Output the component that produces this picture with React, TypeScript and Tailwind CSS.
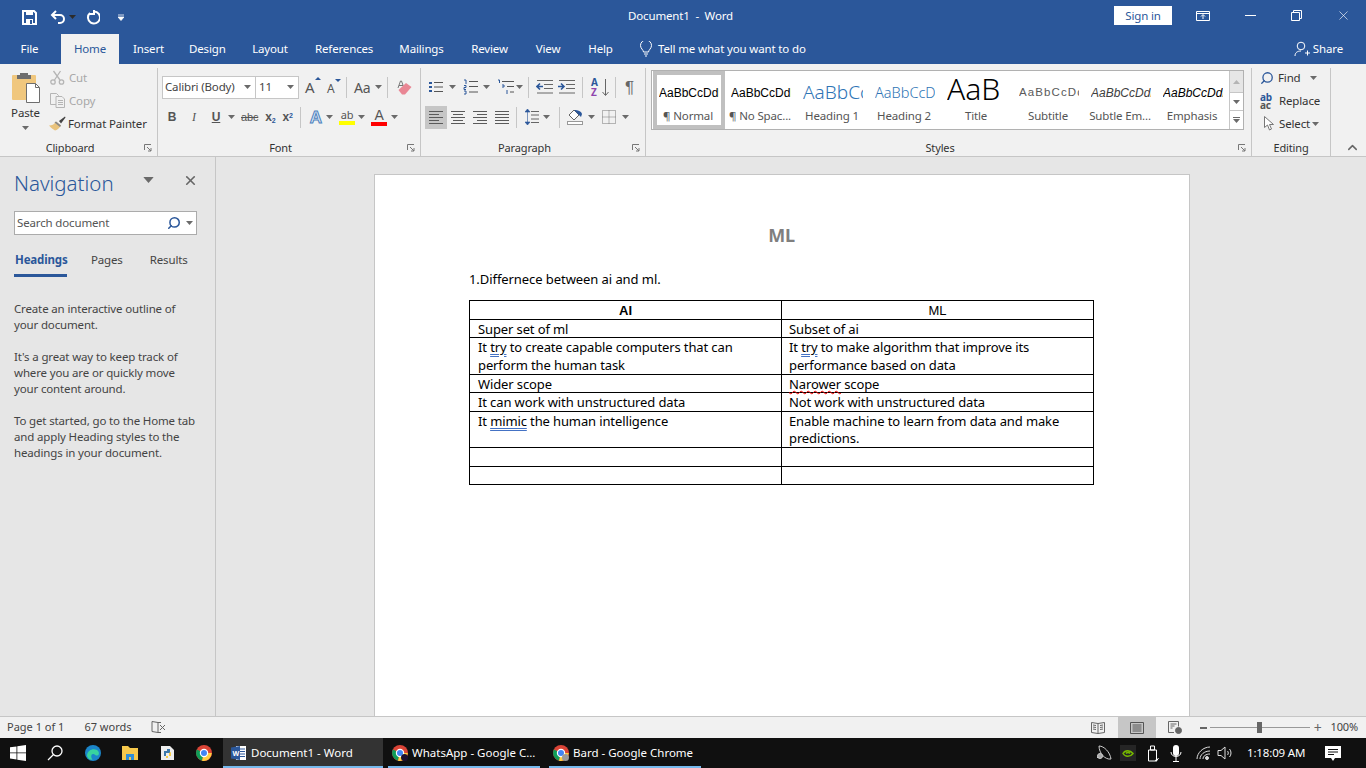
import React from 'react';
import { ChevronUp, X, Search } from 'lucide-react';

const ui = "font-['Noto_Sans',sans-serif] tracking-[-0.15px]";

const Caret = ({ className = '' }: { className?: string }) => (
  <svg width="7" height="4" viewBox="0 0 7 4" className={`shrink-0 ${className}`}>
    <path d="M0 0h7L3.5 4z" fill="#6a6a6a" />
  </svg>
);

const Launcher = () => (
  <svg width="8" height="8" viewBox="0 0 8 8" className="shrink-0">
    <path d="M.5 6V.5H7M3 3l4 4M7 4v3H4" fill="none" stroke="#777" />
  </svg>
);

const RibbonGroup = ({
  label,
  width,
  launcher = true,
  children,
}: {
  label: string;
  width: number;
  launcher?: boolean;
  children: React.ReactNode;
}) => (
  <div style={{ width }} className="h-full shrink-0 flex flex-col border-r border-[#c6c6c6] mb-[4px]">
    <div className="flex-1 min-h-0">{children}</div>
    <div className={`h-[18px] flex items-center relative text-[11px] text-[#333] justify-center pt-[2px] ${launcher ? 'pr-[17px]' : ''}`}>
      <span>{label}</span>
      {launcher && (
        <span className="absolute right-[5px] top-[6px]">
          <Launcher />
        </span>
      )}
    </div>
  </div>
);

const BulletsIcon = () => (
  <svg width="14" height="14" viewBox="0 0 14 14">
    <path d="M0 2h3v2H0zM0 6h3v2H0zM0 10h3v2H0z" fill="#2b579a" />
    <path d="M5 2.500h9M5 7h9M5 11.500h9" stroke="#555" />
  </svg>
);

const NumbersIcon = () => (
  <svg width="15" height="16" viewBox="0 0 15 16">
    <path d="M1 1h2v4M1 6.500h2v2H1v2h2M1 12h2v3H1" fill="none" stroke="#2b579a" />
    <path d="M6 2.500h9M6 7.500h9M6 13h9" stroke="#555" />
  </svg>
);

const MultiIcon = () => (
  <svg width="18" height="16" viewBox="0 0 18 16">
    <path d="M1 1h1.500v3M5 6h2v2H5M10 11v4" fill="none" stroke="#2b579a" />
    <path d="M5 2.500h12M10 7.500h7M13 13h4" stroke="#555" />
  </svg>
);

const OutdentIcon = ({ flip = false }: { flip?: boolean }) => (
  <svg width="17" height="14" viewBox="0 0 17 14">
    <path d="M1 .5h16M8 4.500h9M8 8.500h9M1 13h16" stroke="#666" />
    <path d={flip ? 'M0 6.500h5M3 3.500l3 3-3 3' : 'M7 6.500H2M4 3.500l-3 3 3 3'} fill="none" stroke="#2b579a" strokeWidth="1.600" />
  </svg>
);

const AlignIcon = ({ kind }: { kind: 'left' | 'center' | 'right' | 'justify' }) => {
  const rows: Record<string, string> = {
    left: 'M0 .5h14M0 3.500h10M0 6.500h14M0 9.500h10M0 12.500h14',
    center: 'M0 .5h14M2 3.500h10M0 6.500h14M2 9.500h10M0 12.500h14',
    right: 'M0 .5h14M4 3.500h10M0 6.500h14M4 9.500h10M0 12.500h14',
    justify: 'M0 .5h14M0 3.500h14M0 6.500h14M0 9.500h14M0 12.500h14',
  };
  return (
    <svg width="14" height="13" viewBox="0 0 14 13">
      <path d={rows[kind]} stroke="#5a5a5a" />
    </svg>
  );
};

const PasteIcon = () => (
  <svg width="30" height="32" viewBox="0 0 30 32">
    <rect x="1" y="3" width="24" height="25" rx="1" fill="#f0c77e" />
    <path d="M9 3V1h8v2h3v4H6V3z" fill="#6e6e6e" />
    <path d="M15.500 11.500h9l4 4v15h-13z" fill="#fff" stroke="#6e6e6e" />
    <path d="M24.500 11.500v4h4" fill="none" stroke="#6e6e6e" />
  </svg>
);

const ScissorsIcon = () => (
  <svg width="15" height="15" viewBox="0 0 15 15" fill="none" stroke="#b5b5b5" strokeWidth="1.300">
    <circle cx="3" cy="12" r="2.200" />
    <circle cx="11.500" cy="12" r="2.200" />
    <path d="M4.500 10 10.500 1M10 10 3.500 1" />
  </svg>
);

const CopyIcon = () => (
  <svg width="15" height="15" viewBox="0 0 15 15" fill="#f1f1f1" stroke="#b5b5b5">
    <path d="M.5.5h6l2 2v9h-8z" />
    <path d="M6 3.500h6l2.500 2.500v8.500H6zM8 7.500h5M8 9.500h5M8 11.500h5" />
  </svg>
);

const BrushIcon = () => (
  <svg width="17" height="15" viewBox="0 0 17 15">
    <path d="M10 5 16 .5l.5 1L12 7.500z" fill="#444" />
    <path d="M0 9.500c3 0 5-1 7-4l5 4c-2 3-4 4.500-6 5-1-.5-4-2.500-6-5z" fill="#e9c37d" />
    <path d="M7 5.500l5 4-1 1.500-5.500-4.500z" fill="#888" />
  </svg>
);

const EraserIcon = () => (
  <svg width="15" height="15" viewBox="0 0 15 15">
    <path d="M1 8 3.500 1h1L7 8M2 5.500h4" fill="none" stroke="#777" />
    <path d="M1.500 10 9 3l5.500 4L8 14.500H5z" fill="#e98694" />
  </svg>
);

const FillIcon = () => (
  <svg width="17" height="16" viewBox="0 0 17 16">
    <path d="M7 1 2 6l5 5 5-5z" fill="#fff" stroke="#666" />
    <path d="M7 1c4 0 7 1 8 4l-1 3-2-2z" fill="#2b579a" />
    <rect x=".5" y="12.500" width="15" height="3" fill="#fff" stroke="#999" />
  </svg>
);

const BordersIcon = () => (
  <svg width="14" height="14" viewBox="0 0 14 14">
    <path d="M.5.5h13v13H.5zM7 .5v13M.5 7h13" fill="none" stroke="#777" strokeDasharray="1 1" />
  </svg>
);

const LineSpacingIcon = () => (
  <svg width="14" height="16" viewBox="0 0 14 16">
    <path d="M2.500 0 0 3h5zM2.500 16 0 13h5zM2.500 3v10" fill="#2b579a" stroke="#2b579a" strokeWidth=".6" />
    <path d="M6 2.500h8M6 6h8M6 10h8M6 13.500h8" stroke="#666" />
  </svg>
);

const Sep = () => <div className="w-px h-[21px] bg-[#c6c6c6] shrink-0" />;

const styleItems = [
  { label: '¶ Normal', preview: 'AaBbCcDdEe', cls: "text-[12px] text-black font-['Liberation_Sans',sans-serif]", selected: true },
  { label: '¶ No Spac...', preview: 'AaBbCcDdEe', cls: "text-[12px] text-black font-['Liberation_Sans',sans-serif]" },
  { label: 'Heading 1', preview: 'AaBbCcDd', cls: 'text-[19px] text-[#2e74b5] font-light' },
  { label: 'Heading 2', preview: 'AaBbCcDd', cls: 'text-[14.500px] text-[#2e74b5] font-light' },
  { label: 'Title', preview: 'AaB', cls: 'text-[30px] text-black font-light leading-[30px] -mt-[7px]' },
  { label: 'Subtitle', preview: 'AaBbCcDd', cls: "text-[11.500px] text-[#5a5a5a] tracking-[1.100px] font-['Liberation_Sans',sans-serif]" },
  { label: 'Subtle Em...', preview: 'AaBbCcDdEe', cls: "text-[12px] text-[#404040] italic font-['Liberation_Sans',sans-serif]" },
  { label: 'Emphasis', preview: 'AaBbCcDdEe', cls: "text-[12px] text-black italic font-['Liberation_Sans',sans-serif]" },
];

const tabs = [
  { label: 'Insert', width: 29 },
  { label: 'Design', width: 36 },
  { label: 'Layout', width: 36 },
  { label: 'References', width: 57 },
  { label: 'Mailings', width: 45 },
  { label: 'Review', width: 37 },
  { label: 'View', width: 26 },
  { label: 'Help', width: 25 },
];

const Ribbon = () => (
  <div className={`h-[93px] bg-[#f1f1f1] border-b border-[#c6c6c6] flex pt-[4px] shrink-0 ${ui}`}>
    <RibbonGroup label="Clipboard" width={158}>
      <div className="flex h-full">
        <div className="w-[46px] flex flex-col items-center pt-[4px] pl-[5px] text-[11.500px] text-[#333]">
          <PasteIcon />
          <span className="mt-[1px] leading-[16px]">Paste</span>
          <Caret className="mt-[5px]" />
        </div>
        <div className="flex flex-col pl-[4px] -mt-[2px] text-[11.500px]">
          <div className="h-[23px] flex items-center gap-[4px] text-[#a8a8a8]"><ScissorsIcon /><span>Cut</span></div>
          <div className="h-[23px] flex items-center gap-[4px] text-[#a8a8a8]"><CopyIcon /><span>Copy</span></div>
          <div className="h-[23px] flex items-center gap-[2px] text-[#333] whitespace-nowrap -ml-[1px]"><BrushIcon /><span>Format Painter</span></div>
        </div>
      </div>
    </RibbonGroup>

    <RibbonGroup label="Font" width={263}>
      <div className="pl-[4px] pt-[7px]">
        <div className="flex items-center h-[24px]">
          <div className="w-[94px] h-[23px] bg-white border border-[#c6c6c6] flex items-center justify-between pl-[2px] pr-[3px] text-[11.500px] text-[#444]">
            <span className="whitespace-nowrap">Calibri (Body)</span><Caret className="mr-[1px]" />
          </div>
          <div className="w-[43px] h-[23px] bg-white border border-[#c6c6c6] border-l-0 flex items-center justify-between px-[3px] text-[11.500px] text-[#444]">
            <span>11</span><Caret className="mr-[1px]" />
          </div>
          <span className="ml-[6px] w-[15px] text-[15px] text-[#555] relative leading-none">A<span className="absolute -top-[3px] -right-[1px] w-0 h-0 border-x-[3px] border-b-[3px] border-x-transparent border-b-[#2b579a]" /></span>
          <span className="ml-[7px] w-[15px] text-[12px] text-[#555] relative leading-none pt-[3px]">A<span className="absolute -top-[1px] right-[1px] w-0 h-0 border-x-[3px] border-t-[3px] border-x-transparent border-t-[#2b579a]" /></span>
          <div className="ml-[4px]"><Sep /></div>
          <span className="ml-[7px] text-[14px] text-[#555]">Aa</span>
          <Caret className="ml-[4px]" />
          <div className="ml-[5px]"><Sep /></div>
          <span className="ml-[9px]"><EraserIcon /></span>
        </div>
        <div className="flex items-center h-[24px] mt-[6px] pl-[3px] text-[#555]">
          <span className="w-[14px] text-center text-[12px] font-bold font-['Liberation_Sans',sans-serif]">B</span>
          <span className="ml-[8px] w-[14px] text-center text-[12px] italic font-['Liberation_Serif',serif]">I</span>
          <span className="ml-[8px] w-[14px] text-center text-[12px] font-bold underline font-['Liberation_Sans',sans-serif]">U</span>
          <Caret className="ml-[5px]" />
          <span className="ml-[6px] text-[11px] line-through font-['Liberation_Sans',sans-serif]">abc</span>
          <span className="ml-[7px] text-[12px] font-bold font-['Liberation_Sans',sans-serif]">x<sub className="text-[7px] text-[#2b579a]">2</sub></span>
          <span className="ml-[7px] text-[12px] font-bold font-['Liberation_Sans',sans-serif]">x<sup className="text-[7px] text-[#2b579a]">2</sup></span>
          <div className="ml-[7px]"><Sep /></div>
          <span className="ml-[9px] text-[17px] font-bold text-[#dcebf9] leading-none [-webkit-text-stroke:1px_#4f81bd] font-['Liberation_Sans',sans-serif]">A</span>
          <Caret className="ml-[4px]" />
          <span className="ml-[6px] w-[16px] flex flex-col items-center">
            <span className="text-[11px] leading-[11px] text-[#555]">ab</span>
            <span className="w-[16px] h-[4px] bg-[#ffff00] mt-[1px]" />
          </span>
          <Caret className="ml-[3px]" />
          <span className="ml-[6px] w-[16px] flex flex-col items-center">
            <span className="text-[14px] leading-[12px] text-[#555] font-['Liberation_Sans',sans-serif]">A</span>
            <span className="w-[16px] h-[4px] bg-[#ff0000] mt-[1px]" />
          </span>
          <Caret className="ml-[4px]" />
        </div>
      </div>
    </RibbonGroup>

    <RibbonGroup label="Paragraph" width={225}>
      <div className="pl-[4px] pt-[7px]">
        <div className="flex items-center h-[24px] pl-[4px]">
          <BulletsIcon /><Caret className="ml-[6px]" />
          <span className="ml-[7px]"><NumbersIcon /></span><Caret className="ml-[5px]" />
          <span className="ml-[7px]"><MultiIcon /></span><Caret className="ml-[1px]" />
          <div className="ml-[5px]"><Sep /></div>
          <span className="ml-[7px]"><OutdentIcon /></span>
          <span className="ml-[5px]"><OutdentIcon flip /></span>
          <div className="ml-[7px]"><Sep /></div>
          <span className="ml-[8px] w-[19px] flex items-center">
            <span className="w-[10px] text-[10px] leading-[10px] font-bold flex flex-col">
              <span className="text-[#2b579a]">A</span><span className="text-[#8e44ad]">Z</span>
            </span>
            <svg width="7" height="17" viewBox="0 0 7 17" className="ml-[1px]" fill="none" stroke="#666">
              <path d="M3.500 0v16M.5 13l3 3.500 3-3.500" />
            </svg>
          </span>
          <div className="ml-[5px]"><Sep /></div>
          <span className="ml-[9px] text-[17px] leading-none text-[#666] font-['Liberation_Sans',sans-serif]">¶</span>
        </div>
        <div className="flex items-center h-[24px] mt-[6px]">
          <span className="w-[22px] h-[23px] bg-[#c6c6c6] flex items-center justify-center"><AlignIcon kind="left" /></span>
          <span className="w-[22px] h-[23px] flex items-center justify-center"><AlignIcon kind="center" /></span>
          <span className="w-[22px] h-[23px] flex items-center justify-center"><AlignIcon kind="right" /></span>
          <span className="w-[22px] h-[23px] flex items-center justify-center"><AlignIcon kind="justify" /></span>
          <div className="ml-[3px]"><Sep /></div>
          <span className="ml-[8px]"><LineSpacingIcon /></span><Caret className="ml-[4px]" />
          <div className="ml-[9px]"><Sep /></div>
          <span className="ml-[7px]"><FillIcon /></span><Caret className="ml-[4px]" />
          <span className="ml-[7px]"><BordersIcon /></span><Caret className="ml-[6px]" />
        </div>
      </div>
    </RibbonGroup>

    <RibbonGroup label="Styles" width={606}>
      <div className="pl-[5px] pt-[2px]">
        <div className="w-[593px] h-[60px] border border-[#b1b1b1] bg-white flex">
          <div className="pl-px flex flex-1">
            {styleItems.map((s) => (
              <div
                key={s.label}
                className={`w-[72px] h-full shrink-0 flex flex-col items-center border-[4px] ${s.selected ? 'border-[#c0c0c0]' : 'border-transparent'}`}
              >
                <div className="h-[33px] w-[60px] pt-[3px] tracking-normal">
                  <div className="h-[29px] overflow-hidden flex items-center justify-start">
                    <span className={`whitespace-nowrap ${s.cls}`}>{s.preview}</span>
                  </div>
                </div>
                <div className="pr-[2px] text-[11.500px] text-[#555] leading-[16px] whitespace-nowrap">{s.label}</div>
              </div>
            ))}
          </div>
          <div className="w-[15px] flex flex-col border-l border-[#c6c6c6]">
            <div className="h-[21px] bg-[#e6e6e6] flex items-center justify-center"><Caret className="rotate-180 opacity-40" /></div>
            <div className="h-[19px] border-y border-[#c6c6c6] flex items-center justify-center"><Caret /></div>
            <div className="flex-1 flex flex-col items-center justify-center gap-px">
              <span className="w-[7px] h-px bg-[#6a6a6a]" />
              <Caret />
            </div>
          </div>
        </div>
      </div>
    </RibbonGroup>

    <RibbonGroup label="Editing" width={79} launcher={false}>
      <div className="pl-[8px] -mt-[2px] text-[11.500px] text-[#333]">
        <div className="h-[23px] flex items-center">
          <Search size={14} strokeWidth={2.2} color="#2b579a" className="-scale-x-100" />
          <span className="ml-[4px]">Find</span><Caret className="ml-[9px]" />
        </div>
        <div className="h-[23px] flex items-center">
          <span className="w-[16px] text-[10px] leading-[8px] font-bold text-[#2b579a]">ab<br /><span className="text-[#555]">ac</span></span>
          <span className="ml-[3px]">Replace</span>
        </div>
        <div className="h-[23px] flex items-center">
          <svg width="11" height="15" viewBox="0 0 11 15" className="ml-[4px]">
            <path d="M.5.5v11l3-2.500 2 5 2-1-2-4.500h4z" fill="#fff" stroke="#777" />
          </svg>
          <span className="ml-[4px]">Select</span><Caret className="ml-[2px]" />
        </div>
      </div>
    </RibbonGroup>

    <div className="flex-1 flex items-end justify-center pb-[1px] pl-[7px]">
      <ChevronUp size={15} strokeWidth={2.4} color="#666" />
    </div>
  </div>
);

const TitleBar = () => (
  <div className={`h-[34px] bg-[#2b579a] flex items-center text-white shrink-0 relative ${ui}`}>
    <svg width="15" height="15" viewBox="0 0 15 15" className="ml-[22px]">
      <path d="M1 1h11l2 2v11H1z" fill="none" stroke="#fff" strokeWidth="2" />
      <path d="M4 1h7v4H4zM4 9h7v5H4z" fill="#fff" />
      <path d="M8 10h2v4H8z" fill="#2b579a" />
    </svg>
    <svg width="16" height="14" viewBox="0 0 16 14" className="ml-[13px]" fill="none" stroke="#fff" strokeWidth="2">
      <path d="M6 1 2 5l4 4M2 5h8a4 4 0 0 1 0 8H8" />
    </svg>
    <Caret className="ml-[3px] invert brightness-200" />
    <svg width="15" height="15" viewBox="0 0 15 15" className="ml-[9px]" fill="none" stroke="#fff" strokeWidth="2">
      <path d="M5 3a6 6 0 1 0 4-1.500M9 0v4H5" />
    </svg>
    <svg width="6" height="7" viewBox="0 0 6 7" className="ml-[18px]">
      <path d="M0 1h6M0 3h6L3 6.500z" stroke="#fff" fill="#fff" strokeWidth=".8" />
    </svg>
    <div className="absolute left-[628px] top-[8px] text-[11.500px] leading-[16px] whitespace-nowrap">Document1&nbsp; -&nbsp; Word</div>
    <div className="ml-auto flex items-center -mt-[3px]">
      <div className="w-[58px] h-[19px] bg-white text-[#2b579a] text-[11.500px] flex items-center justify-center">Sign in</div>
      <svg width="14" height="10" viewBox="0 0 14 10" className="ml-[24px]" fill="none" stroke="#fff">
        <path d="M.5.5h13v9H.5zM.5 2.500h13M7 8V4M5 5.500l2-2 2 2" />
      </svg>
      <svg width="11" height="1" viewBox="0 0 11 1" className="ml-[35px]"><path d="M0 .5h11" stroke="#fff" /></svg>
      <svg width="11" height="11" viewBox="0 0 11 11" className="ml-[35px]" fill="none" stroke="#fff">
        <path d="M.5 2.500h8v8h-8zM2.500 2.500v-2h8v8h-2" />
      </svg>
      <X size={15} strokeWidth={1} className="ml-[34px] mr-[15px]" />
    </div>
  </div>
);

const TabBar = () => (
  <div className={`h-[30px] bg-[#2b579a] flex items-stretch text-white text-[11.500px] shrink-0 ${ui}`}>
    <div className="w-[59px] mr-[2px] flex items-center justify-center">File</div>
    <div className="w-[58px] bg-[#f1f1f1] text-[#2b579a] flex items-center justify-center">Home</div>
    <div className="flex items-center gap-[27px] ml-[14px]">
      {tabs.map((t) => (
        <span key={t.label} style={{ width: t.width }} className="whitespace-nowrap text-center">{t.label}</span>
      ))}
    </div>
    <div className="flex items-center ml-[27px]">
      <svg width="12" height="16" viewBox="0 0 12 16" fill="none" stroke="#fff">
        <path d="M3.500 11c0-2-3-3.500-3-6.500a5.500 5.500 0 0 1 11 0c0 3-3 4.500-3 6.500zM4 13h4M5 15h2" />
      </svg>
      <span className="ml-[6px] whitespace-nowrap">Tell me what you want to do</span>
    </div>
    <div className="ml-auto flex items-center mr-[23px]">
      <svg width="16" height="16" viewBox="0 0 16 16" fill="none" stroke="#fff">
        <circle cx="7" cy="5" r="3.800" />
        <path d="M1 15c0-3.500 2.500-5 6-5M11 12h5M13.500 9.500v5" />
      </svg>
      <span className="ml-[3px]">Share</span>
    </div>
  </div>
);

const NavPane = () => (
  <div className={`w-[216px] shrink-0 border-r border-[#c6c6c6] bg-[#e6e6e6] pl-[14px] ${ui}`}>
    <div className="h-[54px] pr-[17px] flex justify-between">
      <span className="text-[20.500px] text-[#2b579a] font-light leading-[28px] mt-[12px] tracking-normal">Navigation</span>
      <div className="flex items-center h-[18px] mt-[14px]">
        <Caret className="scale-150" />
        <X size={15} strokeWidth={2.6} color="#666" className="ml-[31px]" />
      </div>
    </div>
    <div className="w-[183px] h-[24px] border border-[#ababab] bg-white flex items-center pl-[2px] pr-[3px] text-[11.500px] text-[#555]">
      <span>Search document</span>
      <Search size={14} strokeWidth={2.6} color="#2b579a" className="ml-auto -scale-x-100" />
      <Caret className="ml-[5px]" />
    </div>
    <div className="flex text-[11.500px] text-[#444] mt-[15px] h-[27px] leading-[20px]">
      <span className="w-[53px] pl-px text-[#2b579a] font-bold border-b-[3px] border-[#2b579a] whitespace-nowrap">Headings</span>
      <span className="ml-[24px]">Pages</span>
      <span className="ml-[27px]">Results</span>
    </div>
    <div className="mt-[24px] text-[11.500px] leading-[16px] text-[#444] whitespace-nowrap">
      <p>Create an interactive outline of<br />your document.</p>
      <p className="mt-[16px]">It's a great way to keep track of<br />where you are or quickly move<br />your content around.</p>
      <p className="mt-[16px]">To get started, go to the Home tab<br />and apply Heading styles to the<br />headings in your document.</p>
    </div>
  </div>
);

const blueLine = 'underline decoration-double decoration-[#4472c4] underline-offset-2';
const redLine = 'underline decoration-wavy decoration-[#f00000] decoration-1 underline-offset-1';

const Cell = ({
  children,
  second = false,
  lineClass = 'leading-[16px] pt-px',
}: {
  children?: React.ReactNode;
  second?: boolean;
  lineClass?: string;
}) => (
  <td className={`border border-black ${second ? 'pl-[7px]' : 'pl-[8px]'} pr-[8px] align-top text-[13px] ${lineClass} text-black`}>{children}</td>
);

const Page = () => (
  <div className="flex-1 min-w-0 bg-[#e6e6e6] pl-[158px] pt-[17px] overflow-hidden">
    <div className={`w-[816px] h-[600px] bg-white border border-[#c6c6c6] pl-[94px] ${ui}`}>
      <div className="w-[625px] pt-[48px] text-center text-[18px] leading-[24px] font-bold text-[#7f7f7f]">ML</div>
      <p className="text-[13px] leading-[18px] text-black mt-[23px] tracking-[-0.07px]">1.Differnece between ai and ml.</p>
      <table className="w-[625px] mt-[12px] border-collapse table-fixed tracking-[-0.12px]">
        <tbody>
          <tr className="h-[19px]">
            <td className="border border-black w-[312px] pt-px text-center text-[13px] leading-[17px] font-bold font-['Liberation_Sans',sans-serif]">AI</td>
            <td className="border border-black pt-px text-center text-[13px] leading-[17px] font-['Liberation_Sans',sans-serif]">ML</td>
          </tr>
          <tr className="h-[18px]"><Cell>Super set of ml</Cell><Cell second>Subset of ai</Cell></tr>
          <tr className="h-[37px]">
            <Cell lineClass="leading-[18px]">It <span className={blueLine}>try</span> to create capable computers that can perform the human task</Cell>
            <Cell second lineClass="leading-[18px]">It <span className={blueLine}>try</span> to make algorithm that improve its performance based on data</Cell>
          </tr>
          <tr className="h-[18px]"><Cell>Wider scope</Cell><Cell second><span className={redLine}>Narower</span> scope</Cell></tr>
          <tr className="h-[19px]"><Cell lineClass="leading-[18px]">It can work with unstructured data</Cell><Cell second lineClass="leading-[18px]">Not work with unstructured data</Cell></tr>
          <tr className="h-[36px]">
            <Cell lineClass="leading-[17px] pt-px">It <span className={blueLine}>mimic</span> the human intelligence</Cell>
            <Cell second lineClass="leading-[17px] pt-px">Enable machine to learn from data and make predictions.</Cell>
          </tr>
          <tr className="h-[19px]"><Cell /><Cell /></tr>
          <tr className="h-[18px]"><Cell /><Cell /></tr>
        </tbody>
      </table>
    </div>
  </div>
);

const StatusBar = () => (
  <div className={`h-[22px] bg-[#f1f1f1] border-t border-[#c6c6c6] flex items-center text-[11px] text-[#444] shrink-0 ${ui}`}>
    <span className="ml-[7px] tracking-normal">Page 1 of 1</span>
    <span className="ml-[20px] tracking-normal">67 words</span>
    <svg width="15" height="13" viewBox="0 0 15 13" className="ml-[19px]" fill="none" stroke="#666">
      <path d="M7 1.500 1 .5v10l6 1zM7 1.500h3M7 11.500h3M9 4l5 5M14 4 9 9" />
    </svg>
    <div className="ml-auto flex items-center h-full">
      <svg width="14" height="12" viewBox="0 0 14 12" fill="none" stroke="#666">
        <path d="M7 1.500 .5.5v10L7 11.500l6.500-1V.5zM7 1.500v10M2 3l3 .5M2 5l3 .5M2 7l3 .5M9 3.500l3-.5M9 5.500 12 5M9 7.500 12 7" />
      </svg>
      <div className="w-[38px] h-full bg-[#c6c6c6] ml-[13px] flex items-center justify-center">
        <svg width="14" height="12" viewBox="0 0 14 12" fill="none" stroke="#555">
          <path d="M.5.5h13v11H.5zM2.500 3h9M2.500 5h9M2.500 7h9M2.500 9h9" />
        </svg>
      </div>
      <svg width="14" height="13" viewBox="0 0 14 13" className="ml-[12px]" fill="none" stroke="#666">
        <path d="M6 11.500H.5V.5h10v5M2.500 3h6M2.500 5h4M2.500 7h2" />
        <circle cx="10.500" cy="9.500" r="3" fill="#666" />
      </svg>
      <span className="ml-[18px] w-[7px] h-[2px] bg-[#666]" />
      <div className="ml-[3px] w-[100px] h-px bg-[#999] flex items-center justify-center">
        <span className="w-[5px] h-[11px] bg-[#666]" />
      </div>
      <span className="ml-[4px] text-[14px] leading-none text-[#666]">+</span>
      <span className="ml-[9px] mr-[8px]">100%</span>
    </div>
  </div>
);

const TaskTab = ({ width, label, active = false, icon, inset = 4 }: { width: number; label: string; active?: boolean; icon: React.ReactNode; inset?: number }) => (
  <div style={{ width, paddingLeft: inset }} className={`h-full flex items-center pt-[1px] border-b-2 border-[#76b9ed] whitespace-nowrap overflow-hidden shrink-0 ${active ? 'bg-[#333333]' : ''}`}>
    {icon}
    <span className="ml-[4px] text-[11.500px] text-white tracking-normal">{label}</span>
  </div>
);

const Chrome = ({ size = 16 }: { size?: number }) => (
  <svg width={size} height={size} viewBox="0 0 16 16" className="shrink-0">
    <circle cx="8" cy="8" r="8" fill="#db4437" />
    <path d="M8 8 .9 4.500A8 8 0 0 0 6 15.700z" fill="#0f9d58" />
    <path d="M8 8h7.800A8 8 0 0 1 6 15.700z" fill="#ffcd40" />
    <circle cx="8" cy="8" r="3.600" fill="#4285f4" stroke="#fff" strokeWidth="1.200" />
  </svg>
);

const ChromeProfile = ({ color }: { color: string }) => (
  <span className="relative shrink-0 w-[16px] h-[16px]">
    <Chrome />
    <span style={{ backgroundColor: color }} className="absolute right-0 bottom-0 w-[7px] h-[7px] rounded-full" />
  </span>
);

const WordIcon = () => (
  <svg width="16" height="16" viewBox="0 0 16 16" className="shrink-0">
    <path d="M5 1h10v14H5z" fill="#fff" />
    <path d="M9 4h5M9 6.500h5M9 9h5M9 11.500h5" stroke="#2b579a" />
    <path d="M0 2.500 9 1v14L0 13.500z" fill="#2b579a" />
    <text x="1.500" y="10.500" fontSize="7" fontWeight="bold" fill="#fff">W</text>
  </svg>
);

const Taskbar = () => (
  <div className={`h-[30px] bg-[#101010] flex items-center shrink-0 ${ui}`}>
    <svg width="16" height="16" viewBox="0 0 16 16" className="ml-[10px]" fill="#fff">
      <path d="M0 2.300 6.500 1.400v6.100H0zM7.300 1.300 16 0v7.500H7.300zM0 8.300h6.500v6.200L0 13.600zM7.300 8.300H16V16l-8.700-1.300z" />
    </svg>
    <svg width="16" height="16" viewBox="0 0 16 16" className="ml-[21px]" fill="none" stroke="#fff" strokeWidth="1.300">
      <circle cx="10" cy="6" r="5" /><path d="M6.500 9.500 1 15" />
    </svg>
    <svg width="16" height="16" viewBox="0 0 16 16" className="ml-[22px]">
      <circle cx="8" cy="8" r="8" fill="#1b85c9" />
      <path d="M2 10c1-5 6-7 10-5 2.500 1.500 2.500 5 .5 5.500-2 .5-2-1-4-1.500-2.500-.5-3 3-1 5.500C5 15.500 2 13 2 10z" fill="#38d39f" />
    </svg>
    <svg width="16" height="14" viewBox="0 0 16 14" className="ml-[21px]">
      <path d="M0 0h6l2 2h8v12H0z" fill="#f6c94c" />
      <path d="M4 8h8v6H9v-3H7v3H4z" fill="#2f8fd8" />
    </svg>
    <svg width="15" height="16" viewBox="0 0 15 16" className="ml-[22px]">
      <path d="M1 1h9l4 4v10H1z" fill="#eee" />
      <path d="M4 6h3V4h3v4H6v3H4z" fill="#3c78aa" />
      <path d="M11 7v4H8v2H6v-2h3V8z" fill="#f7ce48" />
    </svg>
    <span className="ml-[21px]"><Chrome /></span>
    <div className="ml-[11px] h-full flex">
      <TaskTab width={160} label="Document1 - Word" active inset={8} icon={<WordIcon />} />
      <div className="ml-[5px] h-[30px]"><TaskTab width={152} label="WhatsApp - Google C..." icon={<ChromeProfile color="#1c1030" />} /></div>
      <div className="ml-[9px] h-[30px]"><TaskTab width={152} label="Bard - Google Chrome" icon={<ChromeProfile color="#9a9a9a" />} /></div>
    </div>
    <div className="ml-auto flex items-center h-full text-white">
      <svg width="16" height="16" viewBox="0 0 16 16" fill="none" stroke="#ccc"><path d="M3 1c5 0 11 6 12 13-6 1-12-6-12-13zM1 13l3-3" /><circle cx="4" cy="11" r="2.500" fill="#aaa" /></svg>
      <div className="ml-[8px] w-[16px] h-[16px] bg-[#252525] flex items-center justify-center">
        <svg width="12" height="9" viewBox="0 0 12 9" fill="none" stroke="#76b900" strokeWidth="1.500"><path d="M1 4.500C3 1 8 .5 11 4.500 8 8.500 3 8 1 4.500zM4 4.500c1-1.500 3-1.500 4 0" /></svg>
      </div>
      <svg width="12" height="17" viewBox="0 0 12 17" className="ml-[11px]" fill="none" stroke="#fff"><path d="M3.500 1h4v4h-4zM1.500 5h8v11h-8zM8 15l1.500 1 2-3" /></svg>
      <svg width="12" height="17" viewBox="0 0 12 17" className="ml-[11px]"><rect x="3" y="0" width="6" height="11" rx="3" fill="#fff" /><path d="M1 7c0 6 10 6 10 0M6 12v4M3 16.500h6" fill="none" stroke="#fff" /></svg>
      <svg width="15" height="14" viewBox="0 0 15 14" className="ml-[14px]" fill="none" stroke="#ddd"><path d="M1 13C1 7 7 1 14 1M4 13c0-4 4-8 10-8M7 13c0-3 3-5 7-5" /><circle cx="11" cy="12" r="1.500" fill="#ddd" /></svg>
      <svg width="16" height="14" viewBox="0 0 16 14" className="ml-[6px]" fill="none" stroke="#ddd"><path d="M1 4.500h3L8 1v12L4 9.500H1zM10.500 5c1 1 1 3 0 4M12.500 3c2 2 2 6 0 8" /></svg>
      <span className="ml-[14px] w-[58px] whitespace-nowrap text-[11.500px]">1:18:09 AM</span>
      <svg width="16" height="15" viewBox="0 0 16 15" className="ml-[20px] mr-[25px]"><path d="M0 0h16v12h-6l-2 3-2-3H0z" fill="#fff" /><path d="M3 3.500h10M3 6h10M3 8.500h6" stroke="#101010" /></svg>
    </div>
  </div>
);

export default function App() {
  return (
    <div className="w-[1366px] h-[768px] overflow-hidden flex flex-col bg-[#e6e6e6]">
      <TitleBar />
      <TabBar />
      <Ribbon />
      <div className="flex-1 min-h-0 flex">
        <NavPane />
        <Page />
      </div>
      <StatusBar />
      <Taskbar />
    </div>
  );
}
